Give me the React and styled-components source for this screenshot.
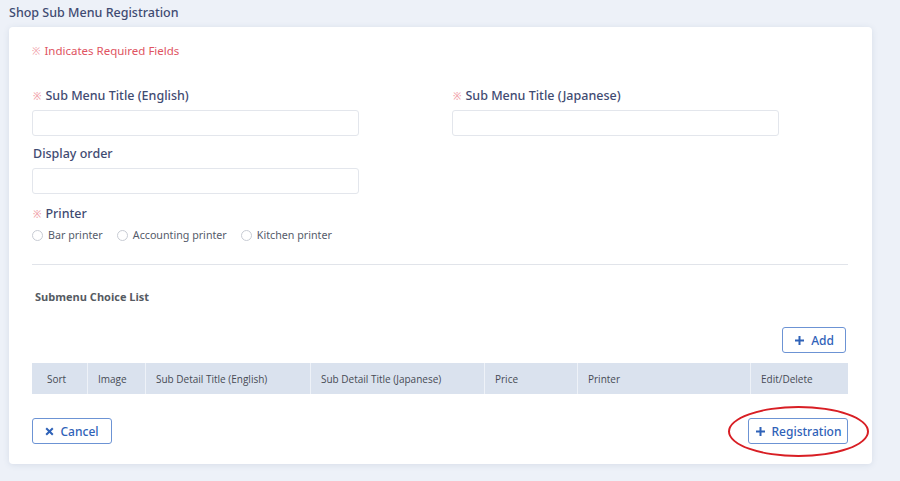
import React from 'react';
import styled, { createGlobalStyle } from 'styled-components';

const GlobalStyle = createGlobalStyle`
  html, body { margin: 0; padding: 0; background: #edf1f8; }
  body { font-family: "Noto Sans", sans-serif; }
  * { box-sizing: border-box; }
`;

const Page = styled.div`
  width: 900px;
  height: 481px;
  padding: 5px 28px 0 9px;
  display: flex;
  flex-direction: column;
  overflow: hidden;
`;

const PageTitle = styled.h1`
  margin: 0;
  height: 22px;
  font-size: 12.5px;
  font-weight: 500;
  color: #3f4b72;
  line-height: 16px;
`;

const Card = styled.div`
  position: relative;
  background: #fff;
  border-radius: 4px;
  box-shadow: 0 1px 6px rgba(60, 80, 120, 0.12);
  height: 437px;
  padding: 16px 24px 0 23px;
`;

const Required = styled.div`
  font-size: 11.5px;
  color: #e05462;
  height: 16px;
  line-height: 16px;
  margin-bottom: 29px;
`;

const Mark = styled.span`
  color: #f0a0a8;
  font-size: 10px;
  margin-right: 4px;
`;

const Row = styled.div`
  display: flex;
  gap: 93px;
`;

const Field = styled.div`
  display: flex;
  flex-direction: column;
  width: 327px;
  margin-bottom: ${p => p.mb || 10}px;
`;

const Label = styled.label`
  font-size: 12.5px;
  font-weight: 500;
  color: #3f4b72;
  line-height: 16px;
  height: 16px;
  margin-bottom: 6px;
  padding-left: 1px;
`;

const Input = styled.input`
  height: 26px;
  border: 1px solid #e3e6ec;
  border-radius: 3px;
  outline: none;
`;

const Radios = styled.div`
  display: flex;
  gap: 14px;
  height: 14px;
`;

const RadioItem = styled.label`
  display: flex;
  align-items: center;
  gap: 5px;
  font-size: 10.7px;
  color: #555b6a;
  white-space: nowrap;
`;

const Circle = styled.span`
  width: 11px;
  height: 11px;
  border: 1px solid #c8ccd4;
  border-radius: 50%;
  display: inline-block;
`;

const Divider = styled.hr`
  border: none;
  border-top: 1px solid #e1e4ea;
  margin: 22px 0 0;
`;

const SectionTitle = styled.div`
  font-family: "Open Sans", sans-serif;
  font-size: 11px;
  font-weight: 700;
  color: #555a62;
  margin: 24px 0 0 3px;
  height: 16px;
`;

const AddRow = styled.div`
  display: flex;
  justify-content: flex-end;
  margin-top: 22px;
  padding-right: 2px;
`;

const Button = styled.button`
  display: flex;
  align-items: center;
  justify-content: center;
  gap: 6px;
  height: 26px;
  width: ${p => p.w}px;
  background: #fff;
  border: 1px solid #6c93d4;
  border-radius: 3px;
  color: #2f62b8;
  font-family: "Noto Sans", sans-serif;
  font-size: 12px;
  font-weight: 500;
  padding: 0;
  cursor: pointer;
`;

const Table = styled.div`
  display: grid;
  grid-template-columns: 55px 58px 165px 174px 93px 173px 98px;
  margin-top: 10px;
  background: #dae2ee;
  height: 31px;
`;

const Th = styled.div`
  font-family: "Open Sans", sans-serif;
  font-size: 10px;
  color: #474b55;
  display: flex;
  align-items: center;
  padding-left: ${p => p.pl || 10}px;
  border-left: ${p => (p.first ? 'none' : '1px solid #eef2f8')};
`;

const Footer = styled.div`
  display: flex;
  justify-content: space-between;
  margin-top: 24px;
`;

const RegWrap = styled.div`
  position: relative;
`;

const Ellipse = styled.span`
  position: absolute;
  left: -20px;
  top: -12px;
  width: 141px;
  height: 51px;
  border: 2.5px solid #d81e24;
  border-radius: 50%;
  pointer-events: none;
`;

const Plus = () => (
  <svg width="11" height="11" viewBox="0 0 11 11">
    <path d="M5.5 1v9M1 5.5h9" stroke="currentColor" strokeWidth="2" />
  </svg>
);

const Cross = () => (
  <svg width="9" height="9" viewBox="0 0 9 9">
    <path d="M1.2 1.2l6.6 6.6M7.8 1.2L1.2 7.8" stroke="currentColor" strokeWidth="2" />
  </svg>
);

const heads = [
  ['Sort', 15],
  ['Image', 10],
  ['Sub Detail Title (English)', 10],
  ['Sub Detail Title (Japanese)', 10],
  ['Price', 10],
  ['Printer', 10],
  ['Edit/Delete', 10],
];

export default function App() {
  return (
    <>
      <GlobalStyle />
      <Page>
        <PageTitle>Shop Sub Menu Registration</PageTitle>
        <Card>
          <Required><Mark>※</Mark>Indicates Required Fields</Required>
          <Row>
            <Field>
              <Label><Mark>※</Mark>Sub Menu Title (English)</Label>
              <Input />
            </Field>
            <Field>
              <Label><Mark>※</Mark>Sub Menu Title (Japanese)</Label>
              <Input />
            </Field>
          </Row>
          <Field mb={12}>
            <Label>Display order</Label>
            <Input />
          </Field>
          <Label as="div"><Mark>※</Mark>Printer</Label>
          <Radios>
            {['Bar printer', 'Accounting printer', 'Kitchen printer'].map(t => (
              <RadioItem key={t}><Circle />{t}</RadioItem>
            ))}
          </Radios>
          <Divider />
          <SectionTitle>Submenu Choice List</SectionTitle>
          <AddRow>
            <Button w={64}><Plus />Add</Button>
          </AddRow>
          <Table>
            {heads.map(([h, pl], i) => (
              <Th key={h} pl={pl} first={i === 0}>{h}</Th>
            ))}
          </Table>
          <Footer>
            <Button w={80}><Cross />Cancel</Button>
            <RegWrap>
              <Button w={100}><Plus />Registration</Button>
              <Ellipse />
            </RegWrap>
          </Footer>
        </Card>
      </Page>
    </>
  );
}
